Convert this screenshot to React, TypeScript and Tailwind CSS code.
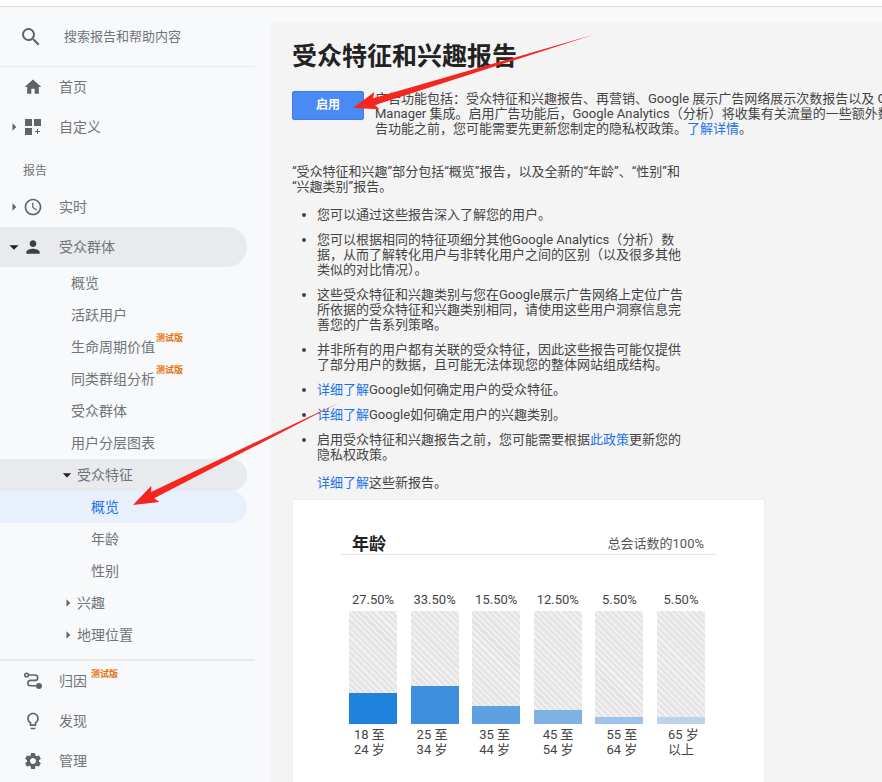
import React from "react";
import { MdHome, MdSearch, MdPerson, MdSettings, MdAccessTime, MdLightbulbOutline, MdArrowRight, MdArrowDropDown } from "react-icons/md";

const Beta = () => (
  <span className="self-start mt-[1px] ml-[1px] text-[9px] leading-[12px] font-bold text-[#e8710a] whitespace-nowrap">测试版</span>
);

function Row({ icon, label, caret, beta, active }: { icon: React.ReactNode; label: string; caret?: "right" | "down"; beta?: boolean; active?: boolean }) {
  return (
    <div className={`relative flex items-center h-10 w-[247px] rounded-r-[20px] ${active ? "bg-[#e8eaed]" : ""}`}>
      <span className="w-[23px] flex justify-center pl-[4px]">
        {caret === "right" && <MdArrowRight className="text-[#5f6368] text-[18px] shrink-0" />}
        {caret === "down" && <MdArrowDropDown className="text-[#202124] text-[22px] shrink-0" />}
      </span>
      <span className="w-5 h-5 flex items-center justify-center text-[#5f6368]">{icon}</span>
      <span className="ml-[16px] text-[14px] text-[#70757a]">{label}</span>
      {beta && <span className="ml-1 self-start mt-[7px] text-[9px] font-bold leading-[12px] text-[#e8710a]">测试版</span>}
    </div>
  );
}

function Sub({ label, beta, indent = "pl-[71px]", caret, active, open }: { label: string; beta?: boolean; indent?: string; caret?: "right" | "down"; active?: boolean; open?: boolean }) {
  return (
    <div className={`flex items-center h-8 w-[247px] rounded-r-[16px] ${indent} ${open ? "bg-[#e8eaed]" : ""} ${active ? "bg-[#e8f0fe]" : ""}`}>
      {caret === "right" && <MdArrowRight className="text-[#5f6368] text-[18px] -ml-[12px] shrink-0" />}
      {caret === "down" && <MdArrowDropDown className="text-[#202124] text-[20px] -ml-[14px] shrink-0" />}
      <span className={`text-[14px] ${active ? "text-[#1a73e8]" : "text-[#70757a]"}`}>{label}</span>
      {beta && <Beta />}
    </div>
  );
}

const A = ({ children }: { children: React.ReactNode }) => <span className="text-[#1a73e8]">{children}</span>;

const bars = [
  { p: "27.50%", h: 31, c: "bg-[#1f82dd]", a: "18 至", b: "24 岁", m: "ml-[5px]" },
  { p: "33.50%", h: 38, c: "bg-[#3e90de]", a: "25 至", b: "34 岁", m: "ml-[6px]" },
  { p: "15.50%", h: 18, c: "bg-[#5fa1e0]", a: "35 至", b: "44 岁", m: "ml-[7px]" },
  { p: "12.50%", h: 14, c: "bg-[#80b1e4]", a: "45 至", b: "54 岁", m: "ml-[9px]" },
  { p: "5.50%", h: 7, c: "bg-[#9fc2e8]", a: "55 至", b: "64 岁", m: "ml-[11px]" },
  { p: "5.50%", h: 7, c: "bg-[#bdd3ec]", a: "65 岁", b: "以上", m: "ml-[11px]" },
];

function arrow(tx: number, ty: number, sx: number, sy: number, len: number, wing: number, shaft: number) {
  const L = Math.hypot(sx - tx, sy - ty);
  const ux = (sx - tx) / L, uy = (sy - ty) / L;
  const nx = -uy, ny = ux;
  const p = (d: number, w: number) => `${(tx + ux * d + nx * w).toFixed(1)},${(ty + uy * d + ny * w).toFixed(1)}`;
  return [p(0, 0), p(len, wing), p(len - 3, shaft), p(L, 0.6), p(len - 3, -shaft), p(len, -wing)].join(" ");
}

export default function App() {
  return (
    <div className="relative h-screen w-full overflow-hidden bg-white font-['Roboto','Noto_Sans_CJK_SC',sans-serif]">
      <div className="h-[7px] bg-white border-b border-[#dadce0]" />
      <div className="flex h-[775px] bg-[#f8f9fb]">
        <aside className="w-[271px] shrink-0 flex flex-col">
          <div className="w-[255px] h-[60px] border-b border-[#e8eaed] flex items-center pl-[19px] shrink-0">
            <MdSearch className="text-[#5f6368] text-[24px]" />
            <span className="ml-[21px] text-[13px] text-[#70757a]">搜索报告和帮助内容</span>
          </div>
          <Row label="首页" icon={<MdHome className="text-[20px]" />} />
          <Row
            label="自定义"
            caret="right"
            icon={
              <svg viewBox="0 0 16 16" className="w-4 h-4" fill="currentColor">
                <rect x="0" y="0" width="7" height="7" />
                <rect x="9" y="0" width="7" height="7" />
                <rect x="0" y="9" width="7" height="7" />
                <path d="M12 10h1v2h2v1h-2v2h-1v-2h-2v-1h2z" />
              </svg>
            }
          />
          <div className="h-10 pl-[23px] pt-[16px] text-[12px] leading-4 text-[#70757a]">报告</div>
          <Row label="实时" caret="right" icon={<MdAccessTime className="text-[20px]" />} />
          <Row label="受众群体" caret="down" active icon={<MdPerson className="text-[22px] text-[#3c4043]" />} />
          <Sub label="概览" />
          <Sub label="活跃用户" />
          <Sub label="生命周期价值" beta />
          <Sub label="同类群组分析" beta />
          <Sub label="受众群体" />
          <Sub label="用户分层图表" />
          <Sub label="受众特征" caret="down" open />
          <Sub label="概览" indent="pl-[91px]" active />
          <Sub label="年龄" indent="pl-[91px]" />
          <Sub label="性别" indent="pl-[91px]" />
          <Sub label="兴趣" caret="right" />
          <Sub label="地理位置" caret="right" />
          <div className="w-[255px] h-[2px] mt-2 bg-[#e8eaed] shrink-0" />
          <Row
            label="归因"
            beta
            icon={
              <svg viewBox="0 0 18 18" className="w-[18px] h-[18px]" fill="none" stroke="currentColor" strokeWidth="1.6">
                <circle cx="2.6" cy="3" r="1.8" />
                <path d="M4.5 3h6.5a2.6 2.6 0 0 1 0 5.4H6.5a2.6 2.6 0 0 0 0 5.4H13" />
                <circle cx="15" cy="14" r="2.2" fill="currentColor" />
              </svg>
            }
          />
          <Row label="发现" icon={<MdLightbulbOutline className="text-[20px]" />} />
          <Row label="管理" icon={<MdSettings className="text-[20px]" />} />
        </aside>
        <main className="flex-1 min-w-0 mt-4 bg-[#f4f4f4] pl-[21px] overflow-hidden text-[13px] leading-[15px] text-[#444]">
          <h1 className="mt-[20px] text-[25px] leading-[28px] font-bold text-[#222]">受众特征和兴趣报告</h1>
          <div className="mt-[20px] flex gap-[11px]">
            <button className="w-[72px] h-[29px] shrink-0 rounded-[2px] border border-[#3b7fe6] bg-[#4a8af4] text-white text-[12px] font-bold">启用</button>
            <div className="whitespace-nowrap">
              <p>{"广告功能包括\uFF1A受众特征和兴趣报告、再营销、Google 展示广告网络展示次数报告以及 Google"}</p>
              <p>{"Manager 集成。启用广告功能后\uFF0CGoogle Analytics\uFF08分析\uFF09将收集有关流量的一些额外数据"}</p>
              <p>{"告功能之前\uFF0C您可能需要先更新您制定的隐私权政策。"}<A>了解详情</A>。</p>
            </div>
          </div>
          <div className="w-[393px] mt-[28px]">
            <p>{"“受众特征和兴趣”部分包括“概览”报告\uFF0C以及全新的“年龄”、“性别”和"}<br />“兴趣类别”报告。</p>
            <ul className="mt-[13px] pl-[25px] list-disc flex flex-col gap-[10px] text-[#444]">
              <li>您可以通过这些报告深入了解您的用户。</li>
              <li>{"您可以根据相同的特征项细分其他Google Analytics\uFF08分析\uFF09数"}<br />{"据\uFF0C从而了解转化用户与非转化用户之间的区别\uFF08以及很多其他"}<br />{"类似的对比情况\uFF09。"}</li>
              <li>这些受众特征和兴趣类别与您在Google展示广告网络上定位广告<br />{"所依据的受众特征和兴趣类别相同\uFF0C请使用这些用户洞察信息完"}<br />善您的广告系列策略。</li>
              <li>{"并非所有的用户都有关联的受众特征\uFF0C因此这些报告可能仅提供"}<br />{"了部分用户的数据\uFF0C且可能无法体现您的整体网站组成结构。"}</li>
              <li><A>详细了解</A>Google如何确定用户的受众特征。</li>
              <li><A>详细了解</A>Google如何确定用户的兴趣类别。</li>
              <li>{"启用受众特征和兴趣报告之前\uFF0C您可能需要根据"}<A>此政策</A>更新您的<br />隐私权政策。</li>
            </ul>
            <p className="mt-[13px] pl-[25px]"><A>详细了解</A>这些新报告。</p>
          </div>
          <section className="mt-[9px] w-[473px] h-[300px] bg-white border border-[#eeeeee] pl-[47px] pr-[47px]">
            <div className="mt-[30px] h-[25px] pt-[3px] border-b border-[#e6e6e6] flex justify-between items-center pl-[12px] pr-[13px]">
              <span className="text-[17px] font-bold text-[#222] leading-[22px]">年龄</span>
              <span className="text-[13px] text-[#555]">总会话数的100%</span>
            </div>
            <div className="mt-[37px] flex justify-between w-[356px] ml-[9px]">
              {bars.map((b) => (
                <div key={b.p + b.a} className="w-[48px] flex flex-col items-center text-[13px] text-[#444]">
                  <span className="leading-[15px] whitespace-nowrap">{b.p}</span>
                  <div className="mt-[4px] w-[48px] h-[113px] flex flex-col justify-end bg-[repeating-linear-gradient(45deg,#e5e5e5_0px,#e5e5e5_3px,#f3f3f3_3px,#f3f3f3_4.5px)]">
                    <div className={b.c} style={{ height: b.h }} />
                  </div>
                  <div className={`mt-[3px] self-start leading-[15px] text-left whitespace-nowrap ${b.m}`}>
                    <div>{b.a}</div>
                    <div>{b.b}</div>
                  </div>
                </div>
              ))}
            </div>
          </section>
        </main>
      </div>
      <svg className="absolute left-0 top-0 pointer-events-none" width="882" height="782">
        <polygon fill="#f4261e" points={arrow(353, 108, 594, 34, 25, 9, 3.5)} />
        <polygon fill="#f4261e" points={arrow(133, 505, 339, 402, 25, 9, 3.5)} />
      </svg>
    </div>
  );
}
